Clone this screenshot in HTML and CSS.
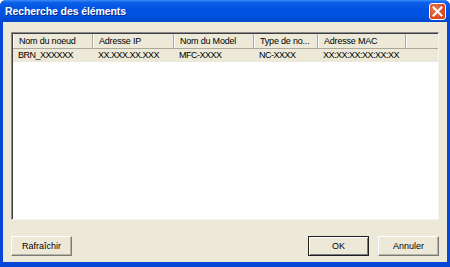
FILE: index.html
```html
<!DOCTYPE html>
<html lang="fr">
<head>
    <meta charset="UTF-8">
    <title>Recherche des éléments</title>
    <link rel="stylesheet" href="styles.css">
</head>
<body>
    <div class="window">
        <!-- Title bar -->
        <div class="titlebar">
            <span class="title">Recherche des éléments</span>
            <button class="close" type="button" aria-label="Fermer">
                <svg width="11" height="11" viewBox="0 0 11 11">
                    <path d="M1.5 1.5 L9.5 9.5 M9.5 1.5 L1.5 9.5" stroke="#fff" stroke-width="2" stroke-linecap="square"/>
                </svg>
            </button>
        </div>

        <!-- Dialog content -->
        <div class="content">
            <div class="listview">
                <div class="row header">
                    <div class="cell c1">Nom du noeud</div>
                    <div class="cell c2">Adresse IP</div>
                    <div class="cell c3">Nom du Model</div>
                    <div class="cell c4">Type de no...</div>
                    <div class="cell c5">Adresse MAC</div>
                    <div class="cell c6"></div>
                </div>
                <div class="row item">
                    <div class="cell c1">BRN_XXXXXX</div>
                    <div class="cell c2">XX.XXX.XX.XXX</div>
                    <div class="cell c3">MFC-XXXX</div>
                    <div class="cell c4">NC-XXXX</div>
                    <div class="cell c5">XX:XX:XX:XX:XX:XX</div>
                </div>
            </div>

            <div class="buttons">
                <button type="button" class="btn">Rafraîchir</button>
                <div class="spacer"></div>
                <button type="button" class="btn default">OK</button>
                <button type="button" class="btn">Annuler</button>
            </div>
        </div>
    </div>
</body>
</html>
```

FILE: styles.css
```css
body {
    margin: 0;
    padding: 0;
    font-family: "Liberation Sans", Arial, sans-serif;
    background: #fff;
}

.window {
    width: 450px;
    height: 267px;
    box-sizing: border-box;
    display: flex;
    flex-direction: column;
    background: #0846d8;
    border-radius: 6px 6px 0 0;
    overflow: hidden;
}

/* XP style title bar */
.titlebar {
    height: 22px;
    flex: none;
    display: flex;
    align-items: center;
    padding: 0 4px 0 5px;
    background: linear-gradient(to bottom, #3a8cf8 0%, #0a5fe8 12%, #0054e3 40%, #0052df 70%, #0047c9 100%);
}

.title {
    flex: 1;
    color: #fff;
    font-weight: bold;
    font-size: 10.5px;
    text-shadow: 1px 1px 0 #0a2a8a;
    letter-spacing: -0.1px;
}

.close {
    width: 17px;
    height: 17px;
    padding: 0;
    margin-top: 1px;
    border: 1px solid #fff;
    border-radius: 3px;
    background: radial-gradient(circle at 35% 35%, #e87a56, #d8461c 70%);
    display: flex;
    align-items: center;
    justify-content: center;
}

.content {
    flex: 1;
    display: flex;
    flex-direction: column;
    margin: 0 3px 5px 3px;
    padding: 10px 8px 6px 8px;
    background: #ece9d8;
}

/* List view */
.listview {
    height: 185px;
    flex: none;
    background: #fff;
    border: 1px solid;
    border-color: #8a8a8a #f4f3ee #f4f3ee #8a8a8a;
    box-shadow: inset 1px 1px 0 #404040;
    padding: 1px 0 0 1px;
}

.row {
    display: flex;
    font-size: 9px;
    color: #000;
}

.cell {
    box-sizing: border-box;
    white-space: nowrap;
    overflow: hidden;
    padding-left: 5px;
}

.header {
    height: 14px;
    background: #ece9d8;
    border-bottom: 1px solid #aca899;
    letter-spacing: -0.2px;
}

.header .cell {
    line-height: 14px;
    border-right: 1px solid #aca899;
    border-left: 1px solid #fff;
}

.header .c6 {
    flex: 1;
    border-right: none;
}

.item {
    height: 13px;
    line-height: 13px;
    align-self: flex-start;
    background: #ece9d8;
    letter-spacing: -0.5px;
}

.c1 { width: 80px; }
.c2 { width: 81px; }
.c3 { width: 80px; }
.c4 { width: 64px; }
.c5 { width: 88px; }

/* Bottom buttons */
.buttons {
    margin-top: auto;
    display: flex;
    gap: 9px;
}

.spacer {
    flex: 1;
}

.btn {
    width: 61px;
    height: 20px;
    padding: 0;
    font-family: "Liberation Sans", Arial, sans-serif;
    font-size: 9px;
    color: #000;
    background: #ece9d8;
    border: 1px solid;
    border-color: #fff #7a7a7a #7a7a7a #fff;
    box-shadow: inset -1px -1px 0 #b8b4a4;
}

.btn.default {
    border-color: #202020;
    box-shadow: inset 1px 1px 0 #fff, inset -1px -1px 0 #7a7a7a;
}
```
